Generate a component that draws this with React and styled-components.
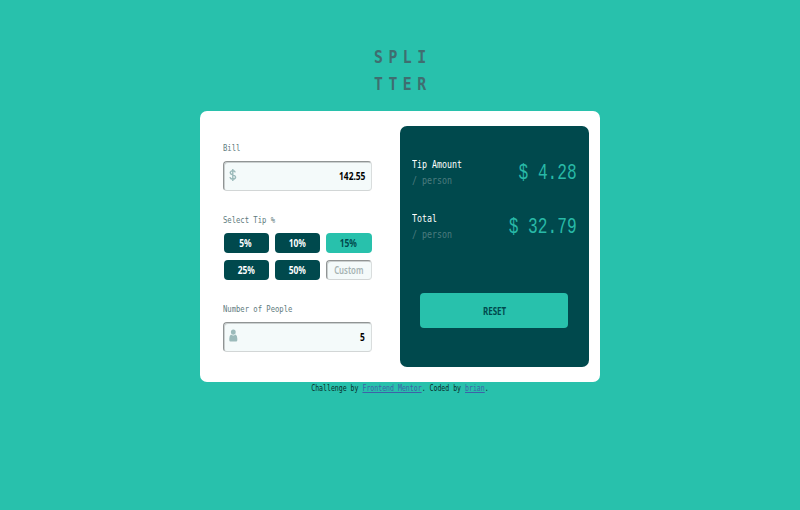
import React from "react";
import styled, { createGlobalStyle } from "styled-components";

const GlobalStyle = createGlobalStyle`
  *, *::before, *::after { box-sizing: border-box; }
  body { margin: 0; background: #28c1ac; font-family: "DejaVu Sans Mono", monospace; }
`;

const Page = styled.div`
  min-height: 510px;
  display: flex;
  flex-direction: column;
  align-items: center;
`;

const Logo = styled.h1`
  margin: 44px 0 0;
  height: 66.5px;
  width: 52px;
  color: #3f6e70;
  font-size: 17.4px;
  line-height: 27px;
  font-weight: 700;
`;

const LogoLine = styled.div`
  width: 90px;
  letter-spacing: 6.5px;
  transform: scaleX(0.85);
  transform-origin: left;
  white-space: nowrap;
`;

/* Monospace type narrowed to 80% of its natural width. */
const Mono = styled.span`
  display: block;
  white-space: pre;
  font-family: ${(p) => (p.$light ? '"Liberation Mono"' : '"DejaVu Sans Mono"')}, monospace;
  font-size: ${(p) => p.$size}px;
  line-height: ${(p) => p.$line || 16}px;
  color: ${(p) => p.$color};
  transform: scaleX(${(p) => p.$scale || 0.8});
  transform-origin: ${(p) => p.$origin || "left"};
`;

const Condensed = styled.span`
  display: inline-block;
  font: ${(p) => p.$weight || 700} 10px/16px "Noto Sans", sans-serif;
  white-space: nowrap;
  transform: scaleX(${(p) => p.$scale || 0.84});
  transform-origin: ${(p) => p.$origin || "center"};
`;

const Card = styled.main`
  width: 400px;
  height: 271.5px;
  display: flex;
  background: #fff;
  border-radius: 7px;
`;

const Form = styled.section`
  width: 200px;
  padding: 29px 28px 0 23px;
`;

const Field = styled.div`
  height: ${(p) => p.$height}px;
`;

const InputBox = styled.div`
  height: 29.5px;
  margin-top: 5.5px;
  padding: 0 6px 0 5px;
  display: flex;
  align-items: center;
  justify-content: space-between;
  background: #f4fafa;
  border: 1px solid;
  border-color: #909494 #d9dddd #d2d6d6 #909494;
  border-radius: 4px;
  box-shadow: inset 1px 1px 0 #cbd0d0;
  color: #000;
`;

const Icon = styled.svg`
  display: block;
  margin-bottom: 2px;
`;

const TipGrid = styled.div`
  display: grid;
  grid-template-columns: repeat(3, 45.5px);
  grid-auto-rows: 20px;
  gap: 7px 5.8px;
  margin: 5px 0 0 0.6px;
`;

const TipButton = styled.button`
  display: grid;
  place-items: center;
  padding: 1px 1px 0 0;
  border: 0;
  border-radius: 4px;
  background: ${(p) => (p.$active ? "#28c1ac" : "#00494d")};
  color: ${(p) => (p.$active ? "#00494d" : "#fff")};
`;

const CustomTip = styled.div`
  display: grid;
  place-items: center;
  border: 1px solid;
  border-color: #909494 #d9dddd #d2d6d6 #909494;
  box-shadow: inset 1px 1px 0 #cbd0d0;
  border-radius: 4px;
  background: #f4fafa;
  color: #a5b2b2;
`;

const Summary = styled.section`
  width: 188.5px;
  height: 241.5px;
  margin-top: 15px;
  padding: 30.4px 12px 0 11.5px;
  display: flex;
  flex-direction: column;
  background: #00494d;
  border-radius: 7px;
`;

const ResultRow = styled.div`
  height: 54px;
  display: flex;
  justify-content: space-between;
`;

const Amount = styled.div`
  padding-top: 3px;
`;

const ResetButton = styled.button`
  width: 148px;
  height: 34.5px;
  margin: 29.5px 0 0 8.5px;
  padding: 0 0 0 1px;
  border: 0;
  border-radius: 4px;
  background: #28c1ac;
  color: #00494d;
`;

const Link = styled.a`
  color: #3e61a8;
  text-decoration: underline;
`;

const DollarIcon = () => (
  <Icon width="8" height="12" viewBox="0 0 8 12" fill="none" stroke="#9bbaba" strokeWidth="1.4">
    <path d="M6.3 3.4C6 2.3 5 1.8 3.8 1.8S1.2 2.4 1.2 3.7 2.5 5.5 3.8 5.9s2.8.9 2.8 2.2S5.2 10.2 3.8 10.2 1.2 9.5.9 8.2M3.8 0v12" />
  </Icon>
);

const PersonIcon = () => (
  <Icon width="9" height="13" viewBox="0 0 9 13" fill="#9bbaba">
    <ellipse cx="4.3" cy="3.1" rx="2.4" ry="2.7" />
    <path d="M2 5.6Q4.3 7.6 6.6 5.6Q8.3 6.5 8.3 9.5V11.2Q8.3 12.6 7.1 12.6H1.5Q.3 12.6.3 11.2V9.5Q.3 6.5 2 5.6Z" />
  </Icon>
);

const tips = ["5%", "10%", "15%", "25%", "50%"];
const results = [
  { name: "Tip Amount", value: "$ 4.28" },
  { name: "Total", value: "$ 32.79" },
];

export default function App() {
  return (
    <Page>
      <GlobalStyle />
      <Logo>
        <LogoLine>SPLI</LogoLine>
        <LogoLine>TTER</LogoLine>
      </Logo>
      <Card>
        <Form>
          <Field $height={72.2}>
            <Mono $size={9} $color="#5e7a7d">Bill</Mono>
            <InputBox>
              <DollarIcon />
              <Condensed $origin="right">142.55</Condensed>
            </InputBox>
          </Field>
          <Field $height={89}>
            <Mono $size={9} $color="#5e7a7d">Select Tip %</Mono>
            <TipGrid>
              {tips.map((tip) => (
                <TipButton key={tip} $active={tip === "15%"}>
                  <Condensed>{tip}</Condensed>
                </TipButton>
              ))}
              <CustomTip><Condensed $weight={600} $scale={0.78}>Custom</Condensed></CustomTip>
            </TipGrid>
          </Field>
          <Field $height={60}>
            <Mono $size={9} $color="#5e7a7d">Number of People</Mono>
            <InputBox>
              <PersonIcon />
              <Condensed $origin="right">5</Condensed>
            </InputBox>
          </Field>
        </Form>
        <Summary>
          {results.map(({ name, value }) => (
            <ResultRow key={name}>
              <div>
                <Mono $size={10.4} $color="#fff">{name}</Mono>
                <Mono $size={10.4} $color="#4c7c7f">/ person</Mono>
              </div>
              <Amount>
                <Mono $light $size={21.6} $scale={0.75} $line={28} $color="#28b9a7" $origin="right">{value}</Mono>
              </Amount>
            </ResultRow>
          ))}
          <ResetButton><Condensed $scale={0.8}>RESET</Condensed></ResetButton>
        </Summary>
      </Card>
      <Mono $size={8.2} $line={13} $color="#092e2b" $origin="center">
        Challenge by <Link>Frontend Mentor</Link>. Coded by <Link>brian</Link>.
      </Mono>
    </Page>
  );
}
